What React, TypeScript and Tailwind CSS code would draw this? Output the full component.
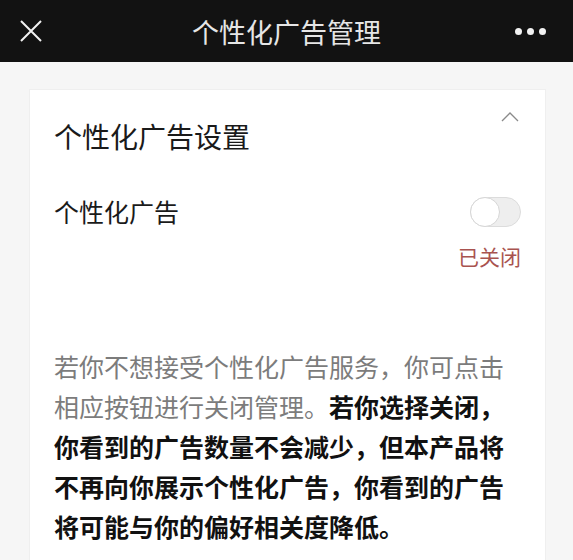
import React, { useState } from 'react';

export default function App() {
  const [on, setOn] = useState(false);

  return (
    <div
      className="w-[573px] h-[560px] overflow-hidden bg-[#f6f6f6]"
      style={{ fontFamily: '"Noto Sans CJK SC", "Noto Sans", sans-serif' }}
    >
      {/* Top bar */}
      <div className="h-[62px] bg-[#121212] flex items-center justify-between px-[19px] relative">
        <svg className="w-[24px] h-[24px]" viewBox="0 0 24 24" fill="none" stroke="#f2f2f2" strokeWidth={2}>
          <path d="M2 2L22 22M22 2L2 22" />
        </svg>
        <h1 className="absolute left-0 right-0 text-center text-[27px] leading-none text-[#e6e6e6] pointer-events-none">
          个性化广告管理
        </h1>
        <div className="flex gap-[5px] pr-[8px]">
          <span className="w-[7px] h-[7px] rounded-full bg-[#f2f2f2]" />
          <span className="w-[7px] h-[7px] rounded-full bg-[#f2f2f2]" />
          <span className="w-[7px] h-[7px] rounded-full bg-[#f2f2f2]" />
        </div>
      </div>

      {/* Card */}
      <div className="mt-[27px] ml-[29px] w-[517px] h-[500px] bg-white border border-[#efefef] pl-[24px] pr-[24px]">
        <div className="flex items-start justify-between pt-[30px]">
          <h2 className="text-[28px] leading-[32px] text-[#1a1a1a]">个性化广告设置</h2>
          <svg className="w-[18px] h-[10px] mt-[-8px] mr-[2px]" viewBox="0 0 18 10" fill="none" stroke="#8a8a8a" strokeWidth={1.3}>
            <path d="M1 9L9 1L17 9" />
          </svg>
        </div>

        <div className="flex items-start justify-between mt-[45px]">
          <span className="text-[25px] leading-[28px] text-[#1a1a1a]">个性化广告</span>
          <div className="flex flex-col items-end">
            <button
              onClick={() => setOn(!on)}
              className={`relative w-[51px] h-[30px] rounded-full border ${on ? 'bg-[#07c160] border-[#07c160]' : 'bg-[#eeeeee] border-[#dcdcdc]'}`}
            >
              <span
                className={`absolute top-[-1px] w-[30px] h-[30px] rounded-full bg-white border border-[#d6d6d6] ${on ? 'left-[20px]' : 'left-[-1px]'}`}
              />
            </button>
            <span className="mt-[17px] text-[21px] leading-[24px] text-[#a9534f]">
              {on ? '已开启' : '已关闭'}
            </span>
          </div>
        </div>

        <p className="mt-[78px] w-[460px] text-[25px] leading-[40px] text-[#7c7c7c]">
          若你不想接受个性化广告服务，你可点击相应按钮进行关闭管理。
          <span className="font-bold text-[#111111]">
            若你选择关闭，你看到的广告数量不会减少，但本产品将不再向你展示个性化广告，你看到的广告将可能与你的偏好相关度降低。
          </span>
        </p>
      </div>
    </div>
  );
}
